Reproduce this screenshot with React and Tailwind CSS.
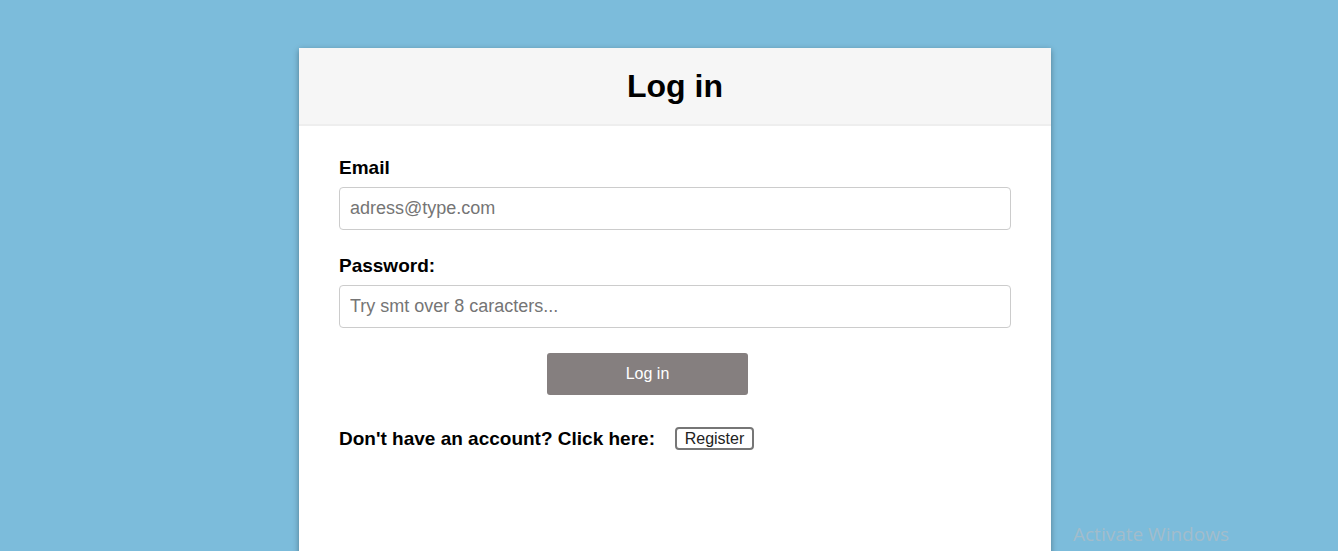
import React from 'react';

const App = () => {
  return (
    <div className="relative min-h-[551px] h-[551px] overflow-hidden bg-[#7cbcdb] pt-[48px] font-['Liberation_Sans',Arial,sans-serif]">
      {/* Card */}
      <div className="ml-[299px] w-[752px] h-[600px] bg-white shadow-[0_2px_6px_rgba(0,0,0,0.35)]">
        <div className="h-[78px] bg-[#f6f6f6] border-b-2 border-[#eeeeee] flex items-center justify-center">
          <h1 className="text-[32px] font-bold text-black leading-none">Log in</h1>
        </div>

        <form className="px-[40px] pt-[31px]" onSubmit={(e) => e.preventDefault()}>
          <label className="block text-[19px] font-bold text-black leading-[21px]">Email</label>
          <input
            type="email"
            placeholder="adress@type.com"
            className="mt-[9px] block w-[672px] h-[43px] rounded-[4px] border border-[#cccccc] px-[10px] text-[18px] text-black placeholder:text-[#757575] outline-none"
          />

          <label className="mt-[25px] block text-[19px] font-bold text-black leading-[21px]">Password:</label>
          <input
            type="password"
            placeholder="Try smt over 8 caracters..."
            className="mt-[9px] block w-[672px] h-[43px] rounded-[4px] border border-[#cccccc] px-[10px] text-[18px] text-black placeholder:text-[#757575] outline-none"
          />

          <button
            type="submit"
            className="mt-[25px] ml-[208px] block w-[201px] h-[42px] rounded-[3px] bg-[#857f7f] text-white text-[16px]"
          >
            Log in
          </button>

          <div className="mt-[32px] flex items-center">
            <span className="text-[19px] font-bold text-black leading-[21px]">Don't have an account? Click here:</span>
            <button
              type="button"
              className="ml-[20px] h-[23px] w-[79px] rounded-[4px] border-2 border-[#767676] bg-white text-[16px] text-[#222] leading-none"
            >
              Register
            </button>
          </div>
        </form>
      </div>

      {/* Windows watermark */}
      <div className="absolute left-[1073px] top-[525px] text-[19px] text-[#a2bccb] font-['Open_Sans',sans-serif] leading-none">
        Activate Windows
      </div>
    </div>
  );
};

export default App;
